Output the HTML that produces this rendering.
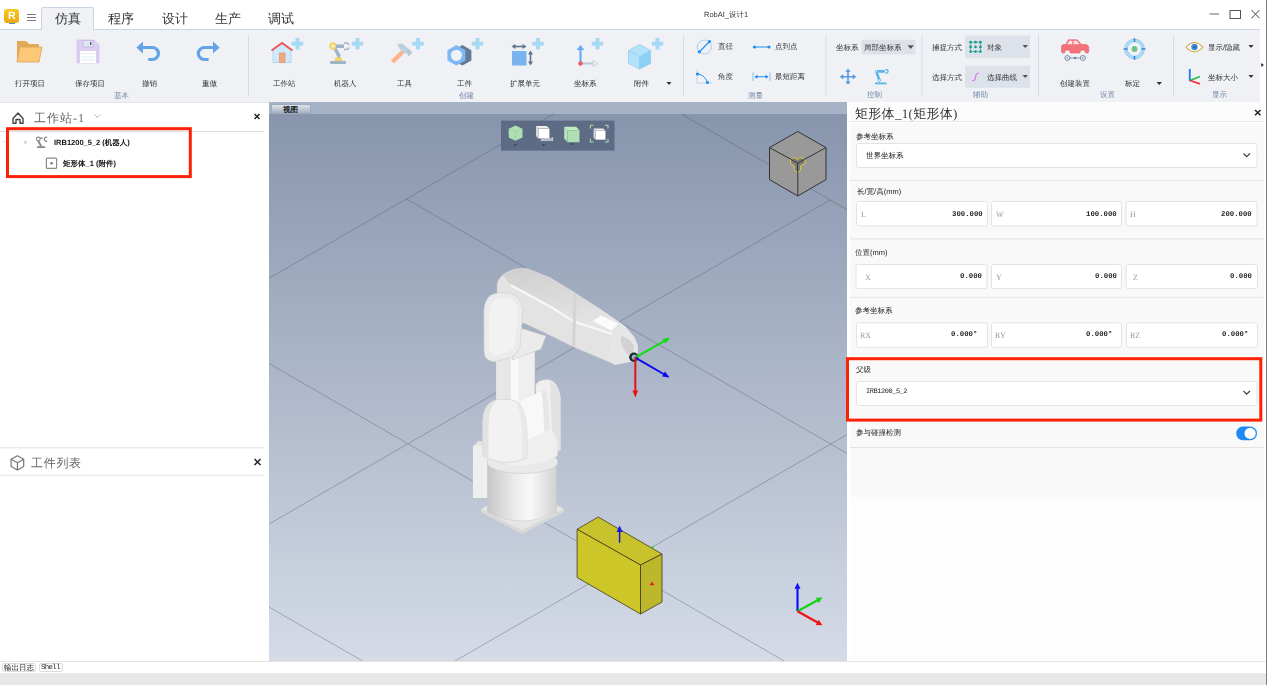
<!DOCTYPE html>
<html><head><meta charset="utf-8">
<style>
*{box-sizing:border-box;margin:0;padding:0}
html,body{width:1267px;height:685px;overflow:hidden;background:#fff;text-rendering:geometricPrecision;font-family:"Liberation Sans",sans-serif;color:#333}
.a{position:absolute}
.t{position:absolute;white-space:nowrap;line-height:1;will-change:transform}
#top{left:0;top:0;width:1267px;height:29px;background:#fff}
#rib{left:0;top:29px;width:1260px;height:73px;background:#eff1f5;border-top:1px solid #c9d5e3}
.lbl{font-size:7.5px;color:#333}
.grp{font-size:7.5px;color:#7387a8}
.sep{position:absolute;width:1px;background:#d5dce8;top:35px;height:61px}
#left{left:0;top:102px;width:269px;height:559px;background:#fff}
#vp{left:269px;top:102px;width:578px;height:559px;overflow:hidden}
#rp{left:847px;top:102px;width:420px;height:559px;background:#fff}
#bot{left:0;top:661px;width:1267px;height:24px;background:#fff;border-top:1px solid #e4e4e4}
.inp{position:absolute;background:#fff;border:1px solid #e3e3e3;border-radius:2px;height:25px}
.ser{font-family:"Liberation Serif",serif}
.mono{font-family:"Liberation Mono",monospace}
</style></head><body>
<div id="top" class="a">
  <div class="a" style="left:4.3px;top:8.6px;width:14.8px;height:14.8px;border-radius:3px;background:linear-gradient(#f8c81c,#eba615)"></div>
  <div class="a" style="left:9px;top:22.5px;width:5.6px;height:1px;background:#5a8fd8"></div>
  <div class="t" style="left:8.3px;top:10.8px;font-size:10.5px;font-weight:bold;color:#fff">R</div>
  <div class="a" style="left:26.5px;top:14px;width:9px;height:1px;background:#777;box-shadow:0 3px 0 #777,0 6px 0 #777"></div>
  <div class="a" style="left:41px;top:7px;width:53px;height:23px;background:#eff1f5;border:1px solid #c9d5e3;border-bottom:none;border-radius:2px 2px 0 0;z-index:2"></div>
  <div class="t ser" style="left:55px;top:12px;font-size:13px;color:#333;z-index:3">仿真</div>
  <div class="t ser" style="left:108px;top:12px;font-size:13px;color:#333">程序</div>
  <div class="t ser" style="left:162px;top:12px;font-size:13px;color:#333">设计</div>
  <div class="t ser" style="left:215px;top:12px;font-size:13px;color:#333">生产</div>
  <div class="t ser" style="left:268px;top:12px;font-size:13px;color:#333">调试</div>
  <div class="t" style="left:703.5px;top:11px;font-size:7.5px;color:#333">RobAI_设计1</div>
  <svg class="a" style="left:1200px;top:0" width="67" height="29" viewBox="1200 0 67 29">
   <line x1="1209.5" y1="14" x2="1219" y2="14" stroke="#666" stroke-width="1"/>
   <rect x="1230" y="10.5" width="10.5" height="8" fill="none" stroke="#555" stroke-width="1"/>
   <path d="M1251.5 10 L1259.5 18.3 M1259.5 10 L1251.5 18.3" stroke="#444" stroke-width="1"/>
  </svg>
</div>
<div id="rib" class="a"></div>
<!-- ribbon content -->
<svg class="a" style="left:0;top:29px" width="1267" height="73" viewBox="0 29 1267 73">
 <!-- separators -->
 <g stroke="#d3dbe7" stroke-width="1">
  <line x1="248.5" y1="35" x2="248.5" y2="96"/>
  <line x1="683.5" y1="35" x2="683.5" y2="96"/>
  <line x1="826" y1="35" x2="826" y2="96"/>
  <line x1="922" y1="35" x2="922" y2="96"/>
  <line x1="1038.5" y1="35" x2="1038.5" y2="96"/>
  <line x1="1173.5" y1="35" x2="1173.5" y2="96"/>
 </g>
 <!-- folder -->
 <path d="M17 41 h9 l3 3 h10 v4 h-22z" fill="#e3aa55"/>
 <path d="M17 44 h22 v18 h-22z" fill="#e3aa55"/>
 <path d="M20 47 h22 l-3 15 h-22z" fill="#fcc776" stroke="#dca356" stroke-width="0.8"/>
 <!-- floppy -->
 <path d="M77 40 h17 l5 5 v18 h-22z" fill="#dccdf1" stroke="#cdbbe6" stroke-width="0.6"/>
 <rect x="83" y="40.5" width="10" height="6.5" fill="#dce8f2" stroke="#b9a9d9" stroke-width="0.6"/>
 <rect x="90" y="42" width="1.3" height="3" fill="#555"/>
 <rect x="80" y="51" width="16" height="12" fill="#fff"/>
 <g stroke="#cfe0f0" stroke-width="0.6"><line x1="81" y1="54" x2="95" y2="54"/><line x1="81" y1="57" x2="95" y2="57"/><line x1="81" y1="60" x2="95" y2="60"/></g>
 <!-- undo -->
 <path d="M142 47.5 H152.5 A6 6 0 0 1 152.5 59.5 H148.3" fill="none" stroke="#63a4e8" stroke-width="3.2"/>
 <path d="M136.3 47.5 L143 41.5 V53.5 Z" fill="#63a4e8"/>
 <!-- redo -->
 <path d="M214 47.5 H204.3 A6 6 0 0 0 204.3 59.5 H208.6" fill="none" stroke="#63a4e8" stroke-width="3.2"/>
 <path d="M219.7 47.5 L213 41.5 V53.5 Z" fill="#63a4e8"/>
 <!-- plus signs -->
 <g fill="#a6d9f3">
  <path d="M295.5 38 h4 v3.7 h3.7 v4 h-3.7 v3.7 h-4 v-3.7 h-3.7 v-4 h3.7z"/>
  <path d="M355.5 38 h4 v3.7 h3.7 v4 h-3.7 v3.7 h-4 v-3.7 h-3.7 v-4 h3.7z"/>
  <path d="M416 38 h4 v3.7 h3.7 v4 h-3.7 v3.7 h-4 v-3.7 h-3.7 v-4 h3.7z"/>
  <path d="M475.5 38 h4 v3.7 h3.7 v4 h-3.7 v3.7 h-4 v-3.7 h-3.7 v-4 h3.7z"/>
  <path d="M536 38 h4 v3.7 h3.7 v4 h-3.7 v3.7 h-4 v-3.7 h-3.7 v-4 h3.7z"/>
  <path d="M595.5 38 h4 v3.7 h3.7 v4 h-3.7 v3.7 h-4 v-3.7 h-3.7 v-4 h3.7z"/>
  <path d="M655.5 38 h4 v3.7 h3.7 v4 h-3.7 v3.7 h-4 v-3.7 h-3.7 v-4 h3.7z"/>
 </g>
 <!-- house -->
 <path d="M273 50 L282 43.5 L291 50 V62.5 H273 Z" fill="#cfeafb" stroke="#a9cfe9" stroke-width="0.7"/>
 <path d="M271.5 50.5 L282 43 L292.5 50.5" fill="none" stroke="#ec5a5e" stroke-width="2"/>
 <rect x="279.5" y="53" width="5.5" height="9.5" fill="#f5a87a" stroke="#de8a5a" stroke-width="0.6"/>
 <!-- robot arm -->
 <rect x="330" y="61" width="16" height="3" rx="1" fill="#9fb3c8"/>
 <path d="M334 61 L336 57 L341 57 L343 61Z" fill="#f3d36b"/>
 <path d="M332 46 L338 58 L341 56 L335 45Z" fill="#9fb3c8"/>
 <circle cx="333" cy="46" r="3.8" fill="#f3d36b"/><circle cx="333" cy="46" r="1.6" fill="#eef1f5"/>
 <rect x="336" y="44.5" width="8" height="3.5" fill="#9fb3c8"/>
 <path d="M344 43 h3 a3 3 0 0 1 2 2 M344 49.5 h3 a3 3 0 0 0 2 -2" fill="none" stroke="#9fb3c8" stroke-width="1.5"/>
 <!-- hammer -->
 <path d="M390.8 60.5 L401.5 50 L404.5 53 L394 63.5 Z" fill="#fcb488"/>
 <path d="M397 44 L402.2 43.5 L409.5 49.5 L407 53.5 L403.5 53 L399.5 48.5 Z" fill="#bccfdc"/>
 <path d="M406 52 L409.5 49.5 L412.3 52.6 L408.8 56.5 Z" fill="#b3c7d6"/>
 <!-- nut -->
 <path d="M462.4 45 L471.4 50.15 V60.45 L462.4 65.6 L453.4 60.45 V50.15Z" fill="#637b96"/>
 <path d="M456.4 45 L465.4 50.15 V60.45 L456.4 65.6 L447.4 60.45 V50.15Z" fill="#7fb8f2"/>
 <circle cx="456.4" cy="55.3" r="5.6" fill="#eef1f5"/>
 <!-- extension -->
 <rect x="512" y="51" width="14.5" height="14.5" fill="#7ab4f0"/>
 <path d="M513 46.5 H525" stroke="#5f7590" stroke-width="1.6"/>
 <path d="M511.5 46.5 L515.5 44 V49Z M526.5 46.5 L522.5 44 V49Z" fill="#5f7590"/>
 <path d="M530.5 52 V64" stroke="#5f7590" stroke-width="1.6"/>
 <path d="M530.5 50.5 L528 54.5 H533Z M530.5 65.5 L528 61.5 H533Z" fill="#5f7590"/>
 <!-- coord -->
 <path d="M580.5 64 V49" stroke="#6aaaf0" stroke-width="2.2"/>
 <path d="M576.5 50 L580.5 45 L584.5 50Z" fill="#6aaaf0"/>
 <path d="M581 63.5 H594" stroke="#b9c7d4" stroke-width="2"/>
 <path d="M593 60.5 L598 63.5 L593 66.5Z" fill="#eef1f5" stroke="#b9c7d4" stroke-width="0.8"/>
 <circle cx="580.5" cy="63.5" r="2.2" fill="#f05a64"/>
 <!-- cube -->
 <path d="M639.5 44.5 L650.5 50.5 V63.5 L639.5 69 L628.5 63.5 V50.5Z" fill="#b3e2fb" stroke="#8cc7ec" stroke-width="0.7"/>
 <path d="M628.5 50.5 L639.5 56.5 L650.5 50.5 M639.5 56.5 V69" fill="none" stroke="#8cc7ec" stroke-width="0.7"/>
 <path d="M639.5 56.5 L650.5 50.5 V63.5 L639.5 69Z" fill="#8ed0f5"/>
 <path d="M666.5 82 h5 l-2.5 3z" fill="#333"/>
 <!-- measure icons -->
 <circle cx="704.3" cy="47" r="7" fill="none" stroke="#9cc6ee" stroke-width="0.8"/>
 <line x1="699.3" y1="52" x2="709.5" y2="41.5" stroke="#1e8ef0" stroke-width="1.1"/>
 <circle cx="699.3" cy="51.8" r="1.6" fill="#1e8ef0"/><circle cx="709.5" cy="41.5" r="1.6" fill="#1e8ef0"/>
 <line x1="754.5" y1="47" x2="769" y2="47" stroke="#1e8ef0" stroke-width="1"/>
 <circle cx="754.5" cy="47" r="1.6" fill="#1e8ef0"/><circle cx="769" cy="47" r="1.6" fill="#1e8ef0"/>
 <path d="M697 69 V83 H712.5" fill="none" stroke="#a9cdee" stroke-width="0.7"/>
 <path d="M697.5 74 Q704 74.5 707.5 82" fill="none" stroke="#1e8ef0" stroke-width="1"/>
 <circle cx="697.5" cy="74" r="1.6" fill="#1e8ef0"/><circle cx="707.5" cy="82.5" r="1.6" fill="#1e8ef0"/>
 <path d="M753 72.5 V81 M770 72.5 V81" stroke="#8fbde6" stroke-width="1"/>
 <line x1="755" y1="76.7" x2="768" y2="76.7" stroke="#1e8ef0" stroke-width="1"/>
 <path d="M754.5 76.7 L757.5 74.7 V78.7Z M768.5 76.7 L765.5 74.7 V78.7Z" fill="#1e8ef0"/>
 <!-- coordsys dropdown -->
 <rect x="861.5" y="39.8" width="54" height="14.5" fill="#dde2ea"/>
 <path d="M907.5 45.3 h6.4 l-3.2 3.6z" fill="#555"/>
 <!-- move icon -->
 <path d="M848 69.5 V84 M840.5 76.8 H855.5" stroke="#5b9be2" stroke-width="1.6"/>
 <path d="M848 68.8 L845.3 72 H850.7Z M848 84.6 L845.3 81.4 H850.7Z M840 76.8 L843.2 74.1 V79.5Z M856 76.8 L852.8 74.1 V79.5Z" fill="#5b9be2"/>
 <!-- small robot -->
 <rect x="875" y="82.5" width="11.5" height="1.8" fill="#5ab4ea"/>
 <path d="M875.3 72.5 L878.5 81.5 L881 81 L877.8 72Z" fill="#5ab4ea"/>
 <circle cx="879.3" cy="80.3" r="1.3" fill="#eef1f5" stroke="#5ab4ea" stroke-width="0.8"/>
 <rect x="875" y="70" width="10" height="2.8" rx="1.4" fill="#5ab4ea"/>
 <circle cx="876.4" cy="71.4" r="0.8" fill="#eef1f5"/>
 <path d="M885.2 69.6 h1.4 a2 2 0 0 1 1.5 1.8 a2 2 0 0 1 -1.5 1.8 h-1.4" fill="none" stroke="#5ab4ea" stroke-width="1.2"/>
 <!-- snap dropdowns -->
 <rect x="965" y="35.6" width="65" height="22.4" fill="#dde2ea"/>
 <rect x="965" y="65.8" width="65" height="22" fill="#dde2ea"/>
 <rect x="970.6" y="42.2" width="9.8" height="9.4" fill="none" stroke="#5aa9e6" stroke-width="0.9"/>
 <g fill="#19a27a">
  <circle cx="970.6" cy="42.2" r="1.35"/><circle cx="975.5" cy="42.2" r="1.35"/><circle cx="980.4" cy="42.2" r="1.35"/>
  <circle cx="970.6" cy="46.9" r="1.35"/><circle cx="975.5" cy="46.9" r="1.35"/><circle cx="980.4" cy="46.9" r="1.35"/>
  <circle cx="970.6" cy="51.6" r="1.35"/><circle cx="975.5" cy="51.6" r="1.35"/><circle cx="980.4" cy="51.6" r="1.35"/>
 </g>
 <path d="M1022.5 45 h5.5 l-2.75 3z M1022.5 75 h5.5 l-2.75 3z" fill="#555"/>
 <path d="M972.3 80.6 Q975.3 81 975.6 77 Q975.9 73 979 73.3" fill="none" stroke="#d074e6" stroke-width="1.1"/>
 <!-- car -->
 <path d="M1061.5 47 Q1061.5 44.6 1064 44.6 H1065.8 L1068.5 39.8 H1077.2 L1081.6 44.6 H1086 Q1088.7 45 1088.7 47.5 V51.5 Q1088.7 53 1087 53 H1085.8 A3 3 0 0 0 1079.8 53 H1070.4 A3 3 0 0 0 1064.4 53 H1063 Q1061.5 53 1061.5 51.5Z" fill="#f6727a" stroke="#e8565f" stroke-width="0.6"/>
 <path d="M1067.2 44.3 L1069.3 40.8 H1072.3 V44.3Z M1073.6 44.3 V40.8 H1076.6 L1079.6 44.3Z" fill="#fde4e6"/>
 <line x1="1067.4" y1="58" x2="1082.8" y2="58" stroke="#7a8fa8" stroke-width="0.9"/>
 <circle cx="1067.4" cy="58" r="2.5" fill="#e3e8ef" stroke="#7a8fa8" stroke-width="1"/><circle cx="1082.8" cy="58" r="2.5" fill="#e3e8ef" stroke="#7a8fa8" stroke-width="1"/>
 <circle cx="1067.4" cy="58" r="0.8" fill="#7a8fa8"/><circle cx="1082.8" cy="58" r="0.8" fill="#7a8fa8"/><circle cx="1075.1" cy="58" r="1.2" fill="#6a7f98"/>
 <!-- target -->
 <circle cx="1134.5" cy="49" r="8.6" fill="none" stroke="#ace0f8" stroke-width="2.4"/>
 <circle cx="1134.5" cy="49" r="9.9" fill="none" stroke="#66b2ec" stroke-width="0.6"/>
 <circle cx="1134.5" cy="49" r="7.3" fill="none" stroke="#66b2ec" stroke-width="0.6"/>
 <circle cx="1134.5" cy="49" r="2.9" fill="#6cc38a"/>
 <path d="M1134.5 38.2 V42 M1134.5 56 V59.8 M1123.7 49 H1127.5 M1141.5 49 H1145.3" stroke="#3a7fd0" stroke-width="1.5"/>
 <path d="M1156.5 82 h5.5 l-2.75 3z" fill="#333"/>
 <!-- eye -->
 <path d="M1186 47.2 Q1194.5 38 1203 47.2 Q1194.5 56.4 1186 47.2Z" fill="#fff" stroke="#d6b35a" stroke-width="1.2"/>
 <circle cx="1194.5" cy="47" r="3.3" fill="#4f93dc"/><circle cx="1194.5" cy="47" r="2" fill="none" stroke="#2f6fb8" stroke-width="0.5"/><circle cx="1194.5" cy="47" r="1" fill="#24508a"/>
 <path d="M1248.5 45 h5 l-2.5 3z M1248.5 75 h5 l-2.5 3z" fill="#333"/>
 <!-- axis icon -->
 <path d="M1189.8 69 V81" stroke="#1a7ff0" stroke-width="1.9"/>
 <path d="M1190 80.5 L1200 76.5" stroke="#22c046" stroke-width="1.8"/>
 <path d="M1190 80.5 L1200 83.8" stroke="#f0303a" stroke-width="1.8"/>
 <path d="M1261.2 63.1 L1264 65.1 L1261.2 67.1z" fill="#333"/>
</svg>
<div class="t lbl" style="left:14.6px;top:80.2px">打开项目</div>
<div class="t lbl" style="left:74.6px;top:80.2px">保存项目</div>
<div class="t lbl" style="left:142px;top:80.2px">撤销</div>
<div class="t lbl" style="left:202px;top:80.2px">重做</div>
<div class="t lbl" style="left:273.4px;top:80.2px">工作站</div>
<div class="t lbl" style="left:334px;top:80.2px">机器人</div>
<div class="t lbl" style="left:397px;top:80.2px">工具</div>
<div class="t lbl" style="left:457.3px;top:80.2px">工件</div>
<div class="t lbl" style="left:510px;top:80.2px">扩展单元</div>
<div class="t lbl" style="left:573.6px;top:80.2px">坐标系</div>
<div class="t lbl" style="left:634.2px;top:80.2px">附件</div>
<div class="t lbl" style="left:718px;top:43.4px">直径</div>
<div class="t lbl" style="left:774.7px;top:43.4px">点到点</div>
<div class="t lbl" style="left:718px;top:73.0px">角度</div>
<div class="t lbl" style="left:774.7px;top:73.0px">最短距离</div>
<div class="t lbl" style="left:836px;top:43.6px">坐标系</div>
<div class="t lbl" style="left:863.6px;top:43.6px">局部坐标系</div>
<div class="t lbl" style="left:931.6px;top:43.6px">捕捉方式</div>
<div class="t lbl" style="left:986.6px;top:43.6px">对象</div>
<div class="t lbl" style="left:931.6px;top:73.6px">选择方式</div>
<div class="t lbl" style="left:986.6px;top:73.6px">选择曲线</div>
<div class="t lbl" style="left:1059.7px;top:80.4px">创建装置</div>
<div class="t lbl" style="left:1124.7px;top:80.4px">标定</div>
<div class="t lbl" style="left:1208px;top:43.8px">显示/隐藏</div>
<div class="t lbl" style="left:1208px;top:74.0px">坐标大小</div>
<div class="t grp" style="left:114px;top:91.8px">基本</div>
<div class="t grp" style="left:458.7px;top:91.6px">创建</div>
<div class="t grp" style="left:748.2px;top:91.8px">测量</div>
<div class="t grp" style="left:866.8px;top:91.2px">控制</div>
<div class="t grp" style="left:973.4px;top:91.2px">辅助</div>
<div class="t grp" style="left:1100px;top:91.0px">设置</div>
<div class="t grp" style="left:1211.7px;top:91.0px">显示</div>



<div id="left" class="a"></div>
<div class="a" style="left:0;top:102px;width:1267px;height:1px;background:#e6e6e6"></div>
  <svg class="a" style="left:0;top:102px" width="269" height="559" viewBox="0 102 269 559">
   <path d="M13 118.5 L18 113 L23 118.5 V123.2 H20 V119.5 H16 V123.2 H13Z" fill="none" stroke="#444" stroke-width="1.4" stroke-linejoin="round"/>
   <path d="M94.5 114.5 L97.3 117.3 L100.1 114.5" fill="none" stroke="#aaa" stroke-width="0.9"/>
   <path d="M254.5 114 L259.5 119 M259.5 114 L254.5 119" stroke="#222" stroke-width="1.5"/>
   <line x1="0" y1="131.5" x2="264" y2="131.5" stroke="#dedede" stroke-width="1"/>
   <circle cx="25.3" cy="142.2" r="1.6" fill="#d6d6d6"/>
   <path d="M4 141.5 L7 143 L4 144.5" fill="#ccc" opacity="0"/>
   <!-- robot tree icon -->
   <rect x="37" y="146.3" width="8.2" height="1.8" rx="0.5" fill="#858585"/>
   <path d="M37.2 141 L40.2 146.5 L42.2 146.5 L39.4 141Z" fill="#858585"/>
   <circle cx="38.3" cy="139" r="1.9" fill="none" stroke="#858585" stroke-width="1.1"/>
   <path d="M40 138.4 L42.8 137.9" stroke="#858585" stroke-width="1.2"/>
   <path d="M47.2 137.3 A2.1 2.1 0 1 0 47.2 141.2" fill="none" stroke="#858585" stroke-width="1.2"/>
   <rect x="46.4" y="158.2" width="10.2" height="10.2" rx="1" fill="#fff" stroke="#8a8a8a" stroke-width="1.2"/>
   <circle cx="51.5" cy="163.3" r="1.3" fill="#777"/>
   <line x1="4" y1="141.5" x2="10" y2="141.5" stroke="#ddd" stroke-width="1"/>
   <rect x="7.5" y="128.7" width="182.8" height="47.9" fill="none" stroke="#fd2205" stroke-width="3"/>
   <line x1="0" y1="447.8" x2="264" y2="447.8" stroke="#e3e3e3" stroke-width="1"/>
   <line x1="0" y1="475.4" x2="264" y2="475.4" stroke="#e3e3e3" stroke-width="1"/>
   <g fill="none" stroke="#777" stroke-width="1.2" stroke-linejoin="round">
    <path d="M17.4 455.8 L23.7 459.3 V466.5 L17.4 470 L11.1 466.5 V459.3Z"/>
    <path d="M11.1 459.3 L17.4 462.8 L23.7 459.3 M17.4 462.8 V470"/>
   </g>
   <path d="M254.5 459 L260.5 465 M260.5 459 L254.5 465" stroke="#222" stroke-width="1.5"/>
  </svg>
  <div class="t ser" style="left:34px;top:111.5px;font-size:12px;letter-spacing:1px;color:#666">工作站-1</div>
  <div class="t" style="left:53.5px;top:139px;font-size:7.5px;color:#111;font-weight:bold">IRB1200_5_2 (机器人)</div>
  <div class="t" style="left:62.8px;top:159.5px;font-size:7.5px;color:#111;font-weight:bold">矩形体_1 (附件)</div>
  <div class="t ser" style="left:31px;top:456.5px;font-size:12px;letter-spacing:0.7px;color:#666">工件列表</div>

<div id="vp" class="a"></div>
<svg class="a" style="left:269px;top:102px" width="578" height="559" viewBox="269 102 578 559">
 <defs>
  <linearGradient id="vbg" x1="0" y1="0" x2="0" y2="1">
   <stop offset="0" stop-color="#8795ad"/>
   <stop offset="1" stop-color="#d5dbe7"/>
  </linearGradient>
  <linearGradient id="tabg" x1="0" y1="0" x2="0" y2="1">
   <stop offset="0" stop-color="#e2e6ec"/>
   <stop offset="1" stop-color="#9aa8bd"/>
  </linearGradient>
 </defs>
 <rect x="269" y="114" width="578" height="547" fill="url(#vbg)"/>
 <rect x="269" y="102" width="578" height="12" fill="#a6b2c5"/>
 <rect x="271.5" y="104.8" width="39" height="9.4" fill="url(#tabg)" stroke="#8c99ad" stroke-width="0.5"/>
 <g stroke="#4f5866" stroke-width="0.8" opacity="0.48"><line x1="269.0" y1="278.3" x2="553.5" y2="114.0"/><line x1="269.0" y1="524.0" x2="830.4" y2="199.8"/><line x1="455.0" y1="661.0" x2="847.0" y2="434.6"/><line x1="681.4" y1="114.0" x2="847.0" y2="209.7"/><line x1="406.2" y1="198.8" x2="847.0" y2="453.4"/><line x1="269.0" y1="363.5" x2="784.2" y2="661.0"/><line x1="269.0" y1="607.0" x2="362.5" y2="661.0"/></g>

 <defs>
  <linearGradient id="cyl" x1="0" y1="0" x2="1" y2="0">
   <stop offset="0" stop-color="#c6c6c6"/><stop offset="0.4" stop-color="#ececec"/><stop offset="0.62" stop-color="#f8f8f8"/><stop offset="1" stop-color="#d2d2d2"/>
  </linearGradient>
  <linearGradient id="topf" x1="0" y1="0" x2="0.3" y2="1">
   <stop offset="0" stop-color="#cfcfcf"/><stop offset="1" stop-color="#e4e4e4"/>
  </linearGradient>
  <linearGradient id="arm" x1="0" y1="0" x2="0" y2="1">
   <stop offset="0" stop-color="#f0f0f0"/><stop offset="1" stop-color="#e2e2e2"/>
  </linearGradient>
 </defs>
 <g id="robot" stroke="#c4c4c4" stroke-width="0.5" stroke-linejoin="round">
  <!-- base plate -->
  <path d="M481 508.7 L522 487 L563.8 508.7 V512 L522 534 L481 512Z" fill="#e6e6e6"/>
  <path d="M481 508.7 L522 530.5 L563.8 508.7 V512 L522 534 L481 512Z" fill="#d8d8d8" stroke="none"/>
  <!-- motor box -->
  <path d="M473 446 L478 441 H492 V496 L473 498Z" fill="#e4e4e4"/>
  <path d="M473 446 H488 V498 H473Z" fill="#eeeeee" stroke="none"/>
  <!-- cylinder -->
  <path d="M487.5 460 V512 Q522 530 556.5 512 V460Z" fill="url(#cyl)"/>
  <!-- right shoulder housing -->
  <path d="M535.7 385 Q538 379.6 548 379.6 Q558 381 560.5 397 V450 L546 458 L536 446Z" fill="#efefef"/>
  <path d="M550 381 Q558 385 560.5 397 V450 L553 454 Z" fill="#e2e2e2" stroke="none"/>
  <!-- lower arm -->
  <path d="M496.3 357 L534.9 338 V400 L496.3 412Z" fill="#efefef"/>
  <path d="M511 352 L518.5 348 V405 L511 408Z" fill="#f9f9f9" stroke="none"/>
  <path d="M496.3 357 L511 352 V408 L496.3 412Z" fill="#e7e7e7" stroke="none"/>
  <!-- turntable -->
  <ellipse cx="522.5" cy="462" rx="35.5" ry="11.5" fill="#e9e9e9"/>
  <path d="M488 457 Q522 474 557.5 456 V440 L550 426 L514 444 L488 450Z" fill="#efefef" stroke="none"/>
  <!-- J2 horizontal cylinder -->
  <path d="M514 404 L545.3 389.5 Q549 400 549.5 430 L526 440Z" fill="#f8f8f8" stroke="none"/>
  <path d="M541 391 L545.3 389.5 Q549 400 549.5 430 L544 432 Q544 405 541 391Z" fill="#e6e6e6" stroke="none"/>
  <path d="M516 438 L521 437 L519 462 L514 461Z" fill="#e4e4e4" stroke="none"/>
  <!-- left shoulder housing -->
  <path d="M482.7 456 V421 Q483.5 402 498 399.5 Q513 398 520 404 Q526.5 414 527 432 V458 Q505 468 482.7 456Z" fill="#f2f2f2"/>
  <path d="M482.7 456 V421 Q483.5 402 498 399.5 Q489 406 488.5 422 V460 Z" fill="#e2e2e2" stroke="none"/>
  <path d="M520 404 Q526.5 414 527 432 V458 L522 459 V430 Q521 414 516 402Z" fill="#e9e9e9" stroke="none"/>
  <!-- link near elbow -->
  <path d="M520 328 L546 336 L541 349 L512 360Z" fill="#ebebeb"/>
  <!-- upper arm / forearm -->
  <path d="M497 284 Q498.5 277 507 272 Q512 269 518 268.5 L527 268.4 L549.4 277.3 L573.5 291.7 L576.7 294.1 L599.2 308.6 L617.8 321 L625 326.3 L634.6 337.5 L637.8 346 L637.8 352 L634 359.5 L631.4 361.6 L615.3 364.8 L573.5 347 L543 332 L523.7 323 L510 332 L497 322Z" fill="#e3e3e3"/>
  <path d="M503 275.5 Q510 270 518 268.5 L527 268.4 L549.4 277.3 L573.5 291.7 L576.7 294.1 L599.2 308.6 L617.8 321 L612 334 L573.5 321.4 L551 307 L510.9 285.3Z" fill="url(#topf)" stroke="none"/>
  <path d="M510.9 285.3 L551 307 L573.5 321.4 L612 334" fill="none" stroke="#f7f7f7" stroke-width="2.2"/>
  <path d="M573.5 292 L576.7 294.1 L575 347.5 L572 346.5Z" fill="#d4d4d4" stroke="none"/>
  <!-- wrist -->
  <path d="M612 334 L617.8 321 L625 326.3 L634.6 337.5 L637.8 346 L637.8 352 L634 359.5 L631.4 361.6 L615.3 364.8 L608 361 Q611 348 612 334Z" fill="#e6e6e6" stroke="none"/>
  <path d="M593 321 L601 315.5 L618 323.5 L612 331Z" fill="#fbfbfb" stroke="none"/>
  <path d="M621 336 Q630 338 634 346 Q634 353 630 357 Q623 351 621 342Z" fill="#d2d2d2" stroke="none"/>
  <!-- elbow housing -->
  <path d="M483.8 310 Q485 294 498 293 H508 Q521 295 523 310 L520 347 Q516 358 505 359 L494 362 Q484 360 484 352Z" fill="#ebebeb"/>
  <path d="M489 313 Q490 300 500 298 H507 Q517 300 518 312 L515 344 Q512 352 504 353 L495 356 Q489 353 489 346Z" fill="#f2f2f2" stroke="none"/>
  <!-- flange -->
  <circle cx="633.8" cy="357.2" r="4.6" fill="#0f2a30" stroke="none"/>
  <circle cx="634.3" cy="357.2" r="2.6" fill="#9fb0b8" stroke="none"/>
 </g>
 <!-- tool axes -->
 <line x1="635.3" y1="357.6" x2="664.9" y2="340.7" stroke="#10dd10" stroke-width="2"/><path d="M670.1 337.7 L665.4 343.6 L662.6 338.7Z" fill="#10dd10"/><line x1="635.3" y1="357.6" x2="664.4" y2="374.5" stroke="#0a0af0" stroke-width="2"/><path d="M669.6 377.5 L662.1 376.4 L665.0 371.6Z" fill="#0a0af0"/><line x1="635.3" y1="357.6" x2="635.3" y2="391.5" stroke="#e81010" stroke-width="2"/><path d="M635.3 397.5 L632.5 390.5 L638.1 390.5Z" fill="#e81010"/>
 <!-- yellow box -->
 <g stroke="#3d3b18" stroke-width="0.8" stroke-linejoin="round">
  <path d="M577.1 529.3 L598.2 517 L662 554 L640.5 565Z" fill="#c8c22c"/>
  <path d="M577.1 529.3 L640.5 565 V614 L577.1 577.5Z" fill="#ccc628"/>
  <path d="M640.5 565 L662 554 V602 L640.5 614Z" fill="#bdb72b"/>
 </g>
 <line x1="619.6" y1="542.7" x2="619.6" y2="530" stroke="#1414f0" stroke-width="1.5"/>
 <path d="M619.6 525.5 L616.6 532 H622.6Z" fill="#1414f0"/>
 <path d="M649.5 585 L652.5 581.5 L654 585.5Z" fill="#f01414"/>
 <path d="M649.8 547 L654 546.3 L653 548.5Z" fill="#22cc22"/>
 <!-- corner axes -->
 <line x1="797.5" y1="611.2" x2="797.5" y2="587.7" stroke="#1414f0" stroke-width="2.2"/><path d="M797.5 582.7 L800.5 588.7 L794.5 588.7Z" fill="#1414f0"/><line x1="797.5" y1="611.2" x2="818.1" y2="600.0" stroke="#14d214" stroke-width="2.2"/><path d="M822.5 597.6 L818.7 603.1 L815.8 597.8Z" fill="#14d214"/><line x1="797.5" y1="611.2" x2="818.1" y2="622.8" stroke="#ee1414" stroke-width="2.2"/><path d="M822.5 625.3 L815.8 625.0 L818.7 619.7Z" fill="#ee1414"/>
 <!-- toolbar -->
 <rect x="501" y="120.6" width="113.5" height="30" fill="#5e6b85"/>
 <path d="M515.5 125.4 L522.5 128.8 V137.5 L515.5 140.7 L508.7 137.5 V128.8Z" fill="#aee0b4"/>
 <path d="M508.7 128.8 L515.5 131.8 L522.5 128.8 M515.5 131.8 V140.7" fill="none" stroke="#6f9a78" stroke-width="0.5" stroke-dasharray="0.9 1.3"/>
 <path d="M513.5 144.3 h4 l-2 2z M541.5 144.3 h4 l-2 2z M569.5 143.3 h4 l-2 2z" fill="#3a4456"/>
 <path d="M536 126 L538.2 128.6 V138.4 L536 136Z" fill="#d8d8d8"/>
 <path d="M536 126 H546.8 L549.4 128.6 H538.2Z" fill="#eeeeee"/>
 <rect x="538.2" y="128.6" width="11.2" height="9.8" fill="#ffffff" stroke="#9aa6b6" stroke-width="0.4"/>
 <text x="540.5" y="141.2" font-family="Liberation Sans" font-size="5.2" fill="#f4f4f4" font-weight="bold">Solid</text>
 <path d="M564.2 126.7 L567.4 130.2 V142.1 L564.2 138.6Z" fill="#b4e6bb"/>
 <path d="M564.2 126.7 H576.1 L579.4 130.2 H567.4Z" fill="#c2ecc8"/>
 <rect x="567.4" y="130.2" width="12" height="11.9" fill="#aee0b4" stroke="#8fb99a" stroke-width="0.4"/>
 <path d="M590.4 128.4 V125.2 H593.6 M604.8 125.2 H608 V128.4 M608 138.8 V142 H604.8 M593.6 142 H590.4 V138.8" fill="none" stroke="#a9dcb1" stroke-width="1.1"/>
 <path d="M593.6 128.4 L595.8 130.8 V139.8 L593.6 137.4Z" fill="#dadada"/>
 <path d="M593.6 128.4 H603.3 L605.5 130.8 H595.8Z" fill="#ececec"/>
 <rect x="595.8" y="130.8" width="9.7" height="9" fill="#fff" stroke="#9aa6b6" stroke-width="0.4"/>
 <!-- view tab text -->
 <text x="283" y="112" font-family="Liberation Sans" font-size="7.5" fill="#222" font-weight="bold">视图</text>
 <!-- view cube -->
 <path d="M797.8 131.5 L826 147.6 V179.6 L797.8 196 L769.5 179.6 V147.6Z" fill="#999" stroke="#333" stroke-width="1"/>
 <path d="M769.5 147.6 L797.8 163 L826 147.6 M797.8 163 V196" fill="none" stroke="#333" stroke-width="1"/>
 <path d="M797.6 159.8 Q796 157 794.3 157.6 Q792 158 790.4 160 L790.6 163.6 L794.3 165.8 V169.8 Q795.5 172 797.4 172 Q799.5 171.8 800.6 170 V165.8 L805 163.6 L805.2 160 Q803.4 158 801.2 157.6 Q799.3 157 797.6 159.8Z" fill="#7d7d7d" stroke="#e2d42a" stroke-width="0.9" stroke-linejoin="round"/>
 <path d="M790.8 159.2 L797.6 163.3 L804.8 159.2 M797.6 163.3 V172.5" fill="none" stroke="#2a2a2a" stroke-width="0.9"/>
</svg>
<div id="rp" class="a"></div>
<div class="a" style="left:847px;top:102px;width:3px;height:559px;background:#fff"></div>
<div class="a" style="left:850px;top:102px;width:414px;height:20px;background:#fdfcfd;border-bottom:1px solid #e6e6e6"></div>
<div class="a" style="left:850px;top:123px;width:414px;height:538px;background:#fefdfe"></div><div class="a" style="left:850px;top:123px;width:414px;height:374px;background:#f9f9f9"></div>
<div class="a" style="left:1264px;top:102px;width:3px;height:559px;background:#fff"></div>

<div class="t ser" style="left:855.3px;top:107px;font-size:13px;letter-spacing:0.3px;color:#333">矩形体_1(矩形体)</div>
<svg class="a" style="left:845px;top:102px" width="422" height="559" viewBox="845 102 422 559">
 <path d="M1255 110 L1260.5 115.3 M1260.5 110 L1255 115.3" stroke="#222" stroke-width="1.5"/>
 <g stroke="#e4e4e4" stroke-width="1">
  <line x1="850" y1="180.5" x2="1264" y2="180.5"/>
  <line x1="850" y1="238.9" x2="1264" y2="238.9"/>
  <line x1="850" y1="297.3" x2="1264" y2="297.3"/>
  <line x1="850" y1="447.5" x2="1264" y2="447.5"/>
 </g>
 <g fill="#fff" stroke="#e3e3e3" stroke-width="1">
  <rect x="856.5" y="143.5" width="400.5" height="24" rx="2"/>
  <rect x="856.5" y="201.5" width="131" height="24.5" rx="2"/>
  <rect x="991.5" y="201.5" width="130" height="24.5" rx="2"/>
  <rect x="1126" y="201.5" width="131" height="24.5" rx="2"/>
  <rect x="856" y="264.5" width="131" height="24" rx="2"/>
  <rect x="991.5" y="264.5" width="130" height="24" rx="2"/>
  <rect x="1126" y="264.5" width="131.5" height="24" rx="2"/>
  <rect x="856.5" y="322.8" width="131" height="24.6" rx="2"/>
  <rect x="991.5" y="322.8" width="130" height="24.6" rx="2"/>
  <rect x="1126.5" y="322.8" width="131" height="24.6" rx="2"/>
  <rect x="856.5" y="381.5" width="400.5" height="24" rx="2"/>
 </g>
 <path d="M1243.5 153.5 L1246.7 156.7 L1249.9 153.5" fill="none" stroke="#444" stroke-width="1.3"/>
 <path d="M1243.5 391 L1246.7 394.2 L1249.9 391" fill="none" stroke="#444" stroke-width="1.3"/>
 <rect x="847.5" y="358.7" width="413.3" height="61.4" fill="none" stroke="#fd2205" stroke-width="3"/>
 <rect x="1236.2" y="426.6" width="20.8" height="13.6" rx="6.8" fill="#1f8af6"/>
 <circle cx="1250.1" cy="433.4" r="5.6" fill="#fff"/>
</svg>
<div class="t" style="left:856px;top:132.5px;font-size:7.5px;color:#222">参考坐标系</div>
<div class="t" style="left:857px;top:188.2px;font-size:7.5px;color:#222">长/宽/高(mm)</div>
<div class="t" style="left:855px;top:248.9px;font-size:7.5px;color:#222">位置(mm)</div>
<div class="t" style="left:855.2px;top:307px;font-size:7.5px;color:#222">参考坐标系</div>
<div class="t" style="left:855.9px;top:366px;font-size:7.5px;color:#222">父级</div>
<div class="t" style="left:856.3px;top:428.6px;font-size:7.5px;color:#222">参与碰撞检测</div>
<div class="t" style="left:866px;top:152px;font-size:7.5px;color:#222">世界坐标系</div>
<div class="t mono" style="left:865.8px;top:389.3px;font-size:6.9px;letter-spacing:-0.4px;color:#222">IRB1200_5_2</div>
<div class="t ser" style="left:860.5px;top:211px;font-size:8px;color:#999">L</div>
<div class="t ser" style="left:995.5px;top:211px;font-size:8px;color:#999">W</div>
<div class="t ser" style="left:1130px;top:211px;font-size:8px;color:#999">H</div>
<div class="t ser" style="left:864.7px;top:273.5px;font-size:8px;color:#999">X</div>
<div class="t ser" style="left:995.5px;top:273.5px;font-size:8px;color:#999">Y</div>
<div class="t ser" style="left:1133px;top:273.5px;font-size:8px;color:#999">Z</div>
<div class="t ser" style="left:860.4px;top:331.5px;font-size:8px;color:#999">RX</div>
<div class="t ser" style="left:995px;top:331.5px;font-size:8px;color:#999">RY</div>
<div class="t ser" style="left:1130px;top:331.5px;font-size:8px;color:#999">RZ</div>
<div class="t mono" style="right:284.70000000000005px;top:211.8px;font-size:7.3px;color:#222;font-weight:bold">300.000</div>
<div class="t mono" style="right:150.5999999999999px;top:211.8px;font-size:7.3px;color:#222;font-weight:bold">100.000</div>
<div class="t mono" style="right:15.700000000000045px;top:211.8px;font-size:7.3px;color:#222;font-weight:bold">200.000</div>
<div class="t mono" style="right:285.4px;top:274.3px;font-size:7.3px;color:#222;font-weight:bold">0.000</div>
<div class="t mono" style="right:150.5999999999999px;top:274.3px;font-size:7.3px;color:#222;font-weight:bold">0.000</div>
<div class="t mono" style="right:15.5px;top:274.3px;font-size:7.3px;color:#222;font-weight:bold">0.000</div>
<div class="t mono" style="right:289.6px;top:332.3px;font-size:7.3px;color:#222;font-weight:bold">0.000°</div>
<div class="t mono" style="right:155px;top:332.3px;font-size:7.3px;color:#222;font-weight:bold">0.000°</div>
<div class="t mono" style="right:18.700000000000045px;top:332.3px;font-size:7.3px;color:#222;font-weight:bold">0.000°</div>

<div id="bot" class="a"></div>
<div class="a" style="left:0;top:661px;width:1267px;height:24px">
  <div class="a" style="left:2px;top:1.8px;width:34px;height:9px;border:1px solid #ddd;border-radius:2px;background:#fff"></div>
  <div class="t" style="left:4.3px;top:2.8px;font-size:7.5px;color:#222">输出日志</div>
  <div class="a" style="left:39px;top:1.8px;width:24px;height:9px;border:1px solid #ddd;border-radius:2px;background:#fff"></div>
  <div class="t mono" style="left:41px;top:3.9px;font-size:7.4px;letter-spacing:-0.65px;color:#222">Shell</div>
  <div class="a" style="left:0;top:12px;width:1267px;height:12px;background:#e8e8e8"></div>
</div>
<div class="a" style="left:1266px;top:0;width:1px;height:685px;background:#7d7d7d"></div>
</body></html>
